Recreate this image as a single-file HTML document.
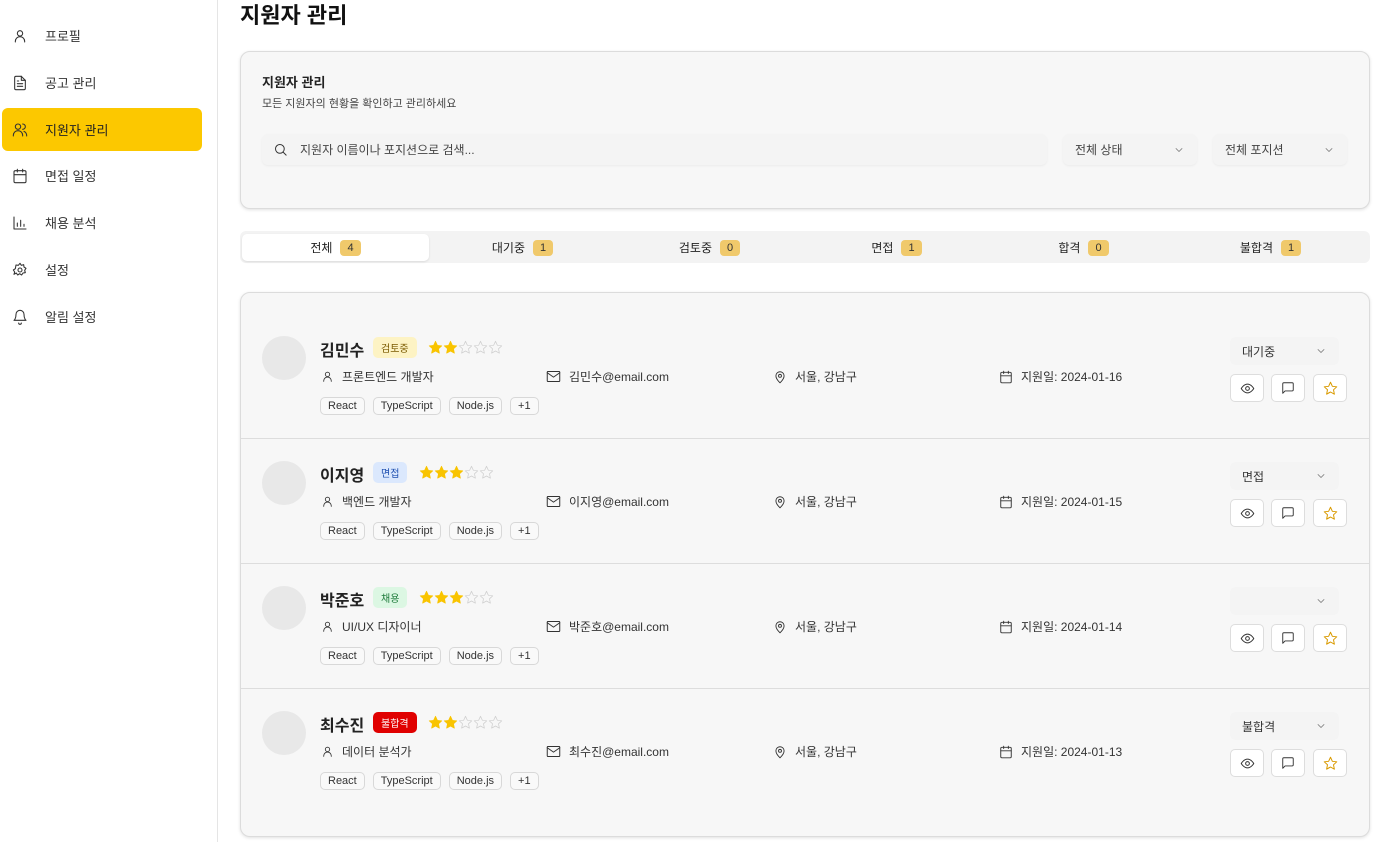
<!DOCTYPE html>
<html><head><meta charset="utf-8"><style>
*{box-sizing:border-box;margin:0;padding:0}
body{width:1397px;height:842px;overflow:hidden;background:#fff;font-family:"Liberation Sans","Noto Sans CJK KR",sans-serif;color:#222;position:relative}
.side{position:absolute;left:0;top:0;width:218px;height:842px;border-right:1px solid #e5e5e5}
.nav{position:absolute;left:2px;width:200px;height:43px;display:flex;align-items:center;font-size:13px;color:#333;border-radius:6px}
.nav svg{position:absolute;left:10px}
.nav span{position:absolute;left:43px}
.nav.act{background:#fcc800;color:#222}
svg{fill:none;stroke:#333;stroke-width:1.6;stroke-linecap:round;stroke-linejoin:round}
h1{position:absolute;left:240px;top:-2px;font-size:22px;font-weight:700;color:#111}
.card{position:absolute;left:240px;width:1130px;background:#f7f7f7;border:1px solid #dcdcdc;border-radius:10px;box-shadow:0 1px 3px rgba(0,0,0,.12)}
.inp{position:absolute;background:#f4f4f4;border-radius:6px;height:31px;box-shadow:0 1px 2px rgba(0,0,0,.05);font-size:12px;color:#444;display:flex;align-items:center}
.tabs{position:absolute;left:240px;top:231px;width:1130px;height:32px;background:#f3f3f3;border-radius:6px}
.tab{position:absolute;top:3px;height:27px;width:187px;display:flex;align-items:center;justify-content:center;font-size:12px;color:#222;gap:8px}
.tab.act{background:#fff;border-radius:5px;box-shadow:0 1px 2px rgba(0,0,0,.1)}
.cnt{background:#f0c96b;border-radius:4px;font-size:11px;padding:2px 7px;color:#333}
.row{position:absolute;left:0;width:1128px;height:125px;border-bottom:1px solid #ddd}
.av{position:absolute;left:21px;top:22px;width:44px;height:44px;border-radius:50%;background:#e8e8e8}
.nm{position:absolute;left:79px;top:23px;font-size:16px;font-weight:700;color:#222}
.bd{position:absolute;top:23px;font-size:10px;padding:3px 8px;border-radius:5px}
.stars{position:absolute;top:26px;display:flex}
.stars svg{width:15px;height:15px;stroke-width:1.2}
.f{fill:#f9c400;stroke:#f9c400 !important}
.e{stroke:#cfcfcf !important}
.info{position:absolute;top:54px;font-size:12px;color:#333;display:flex;align-items:center;gap:8px}
.tags{position:absolute;left:79px;top:83px;display:flex;gap:8px}
.tags span{border:1px solid #d8d8d8;border-radius:5px;font-size:11px;padding:2px 7px;background:#f9f9f9;color:#333}
.sel{position:absolute;left:989px;top:23px;width:109px;height:28px;background:#f4f4f4;border-radius:6px;font-size:12px;color:#333;padding-left:12px;display:flex;align-items:center}
.sel svg,.inp .ch{stroke:#777 !important}
.sel svg{position:absolute;right:12px}
.btn{position:absolute;top:60px;width:34px;height:28px;background:#fff;border:1px solid #ddd;border-radius:5px;display:flex;align-items:center;justify-content:center}
.gold{stroke:#d99a00 !important}
</style></head><body>
<svg width="0" height="0" style="position:absolute"><defs><path id="st" d="M12 2l3 6.5 7 .8-5.2 4.8 1.4 7L12 17.6 5.8 21l1.4-7L2 9.3l7-.8z"/></defs></svg>
<div class="side">
<div class="nav" style="top:14px"><svg width="16" height="16" viewBox="0 0 24 24"><circle cx="12" cy="8" r="4"/><path d="M5 21v-1a7 7 0 0 1 14 0v1"/></svg><span>프로필</span></div>
<div class="nav" style="top:61px"><svg width="16" height="16" viewBox="0 0 24 24"><path d="M14 2H6a2 2 0 0 0-2 2v16a2 2 0 0 0 2 2h12a2 2 0 0 0 2-2V8z"/><path d="M14 2v6h6M8 13h8M8 17h8M8 9h2"/></svg><span>공고 관리</span></div>
<div class="nav act" style="top:108px"><svg width="16" height="16" viewBox="0 0 24 24"><circle cx="9" cy="7" r="4"/><path d="M2 21v-1a7 7 0 0 1 14 0v1M16 3a4 4 0 0 1 0 8M22 21v-1a7 7 0 0 0-4-6"/></svg><span>지원자 관리</span></div>
<div class="nav" style="top:154px"><svg width="16" height="16" viewBox="0 0 24 24"><rect x="3" y="4" width="18" height="18" rx="2"/><path d="M16 2v4M8 2v4M3 10h18"/></svg><span>면접 일정</span></div>
<div class="nav" style="top:201px"><svg width="16" height="16" viewBox="0 0 24 24"><path d="M3 3v18h18M8 17v-5M13 17V8M18 17v-3"/></svg><span>채용 분석</span></div>
<div class="nav" style="top:248px"><svg width="16" height="16" viewBox="0 0 24 24"><circle cx="12" cy="12" r="3"/><path d="M12 2l2 3 3.5-1 .5 3.5 3 2-2 3 1 3.5-3.5.5-2 3-3-2-3 2-2-3L3 18.5l1-3.5-2-3 3-2L6 4.5 9.5 5z"/></svg><span>설정</span></div>
<div class="nav" style="top:295px"><svg width="16" height="16" viewBox="0 0 24 24"><path d="M6 8a6 6 0 0 1 12 0c0 7 3 9 3 9H3s3-2 3-9M10 21a2 2 0 0 0 4 0"/></svg><span>알림 설정</span></div>
</div>
<h1>지원자 관리</h1>
<div class="card" style="top:51px;height:158px">
<div style="position:absolute;left:21px;top:20px;font-size:13px;font-weight:700">지원자 관리</div>
<div style="position:absolute;left:21px;top:43px;font-size:11px;color:#444">모든 지원자의 현황을 확인하고 관리하세요</div>
<div class="inp" style="left:21px;top:82px;width:785px"><svg style="position:absolute;left:11px" width="15" height="15" viewBox="0 0 24 24"><circle cx="11" cy="11" r="7"/><path d="M21 21l-5-5"/></svg><span style="position:absolute;left:38px">지원자 이름이나 포지션으로 검색...</span></div>
<div class="inp" style="left:822px;top:82px;width:134px"><span style="position:absolute;left:12px">전체 상태</span><svg class="ch" style="position:absolute;right:12px" width="12" height="12" viewBox="0 0 24 24"><path d="M6 9l6 6 6-6"/></svg></div>
<div class="inp" style="left:972px;top:82px;width:134px"><span style="position:absolute;left:12px">전체 포지션</span><svg class="ch" style="position:absolute;right:12px" width="12" height="12" viewBox="0 0 24 24"><path d="M6 9l6 6 6-6"/></svg></div>
</div>
<div class="tabs">
<div class="tab act" style="left:2px">전체 <span class="cnt">4</span></div>
<div class="tab" style="left:189px">대기중 <span class="cnt">1</span></div>
<div class="tab" style="left:376px">검토중 <span class="cnt">0</span></div>
<div class="tab" style="left:563px">면접 <span class="cnt">1</span></div>
<div class="tab" style="left:750px">합격 <span class="cnt">0</span></div>
<div class="tab" style="left:937px">불합격 <span class="cnt">1</span></div>
</div>
<div class="card" style="top:292px;height:545px">
<div class="row" style="top:21px">
<div class="av"></div><div class="nm">김민수</div>
<div class="bd" style="left:132px;background:#fdf3c4;color:#7a5a00">검토중</div>
<div class="stars" style="left:187px"><svg viewBox="0 0 24 24"><use href="#st" class="f"/></svg><svg viewBox="0 0 24 24"><use href="#st" class="f"/></svg><svg viewBox="0 0 24 24"><use href="#st" class="e"/></svg><svg viewBox="0 0 24 24"><use href="#st" class="e"/></svg><svg viewBox="0 0 24 24"><use href="#st" class="e"/></svg></div>
<div class="info" style="left:80px"><svg width="13" height="13" viewBox="0 0 24 24"><circle cx="12" cy="8" r="4"/><path d="M5 21v-1a7 7 0 0 1 14 0v1"/></svg>프론트엔드 개발자</div>
<div class="info" style="left:305px"><svg width="15" height="15" viewBox="0 0 24 24"><rect x="2" y="4" width="20" height="16" rx="1"/><path d="M2 6l10 7 10-7"/></svg>김민수@email.com</div>
<div class="info" style="left:532px"><svg width="14" height="14" viewBox="0 0 24 24"><path d="M12 22s7-7 7-12a7 7 0 0 0-14 0c0 5 7 12 7 12z"/><circle cx="12" cy="10" r="2.5"/></svg>서울, 강남구</div>
<div class="info" style="left:758px"><svg width="14" height="14" viewBox="0 0 24 24"><rect x="3" y="4" width="18" height="18" rx="2"/><path d="M16 2v4M8 2v4M3 10h18"/></svg>지원일: 2024-01-16</div>
<div class="tags"><span>React</span><span>TypeScript</span><span>Node.js</span><span>+1</span></div>
<div class="sel">대기중<svg width="12" height="12" viewBox="0 0 24 24"><path d="M6 9l6 6 6-6"/></svg></div>
<div class="btn" style="left:989px"><svg width="15" height="15" viewBox="0 0 24 24"><path d="M2 12s4-7 10-7 10 7 10 7-4 7-10 7S2 12 2 12z"/><circle cx="12" cy="12" r="3"/></svg></div>
<div class="btn" style="left:1030px"><svg width="14" height="14" viewBox="0 0 24 24"><path d="M21 15a2 2 0 0 1-2 2H7l-4 4V5a2 2 0 0 1 2-2h14a2 2 0 0 1 2 2z"/></svg></div>
<div class="btn" style="left:1072px"><svg width="15" height="15" viewBox="0 0 24 24"><use href="#st" class="gold"/></svg></div>
</div>
<div class="row" style="top:146px">
<div class="av"></div><div class="nm">이지영</div>
<div class="bd" style="left:132px;background:#dbe8fd;color:#1e4fb0">면접</div>
<div class="stars" style="left:178px"><svg viewBox="0 0 24 24"><use href="#st" class="f"/></svg><svg viewBox="0 0 24 24"><use href="#st" class="f"/></svg><svg viewBox="0 0 24 24"><use href="#st" class="f"/></svg><svg viewBox="0 0 24 24"><use href="#st" class="e"/></svg><svg viewBox="0 0 24 24"><use href="#st" class="e"/></svg></div>
<div class="info" style="left:80px"><svg width="13" height="13" viewBox="0 0 24 24"><circle cx="12" cy="8" r="4"/><path d="M5 21v-1a7 7 0 0 1 14 0v1"/></svg>백엔드 개발자</div>
<div class="info" style="left:305px"><svg width="15" height="15" viewBox="0 0 24 24"><rect x="2" y="4" width="20" height="16" rx="1"/><path d="M2 6l10 7 10-7"/></svg>이지영@email.com</div>
<div class="info" style="left:532px"><svg width="14" height="14" viewBox="0 0 24 24"><path d="M12 22s7-7 7-12a7 7 0 0 0-14 0c0 5 7 12 7 12z"/><circle cx="12" cy="10" r="2.5"/></svg>서울, 강남구</div>
<div class="info" style="left:758px"><svg width="14" height="14" viewBox="0 0 24 24"><rect x="3" y="4" width="18" height="18" rx="2"/><path d="M16 2v4M8 2v4M3 10h18"/></svg>지원일: 2024-01-15</div>
<div class="tags"><span>React</span><span>TypeScript</span><span>Node.js</span><span>+1</span></div>
<div class="sel">면접<svg width="12" height="12" viewBox="0 0 24 24"><path d="M6 9l6 6 6-6"/></svg></div>
<div class="btn" style="left:989px"><svg width="15" height="15" viewBox="0 0 24 24"><path d="M2 12s4-7 10-7 10 7 10 7-4 7-10 7S2 12 2 12z"/><circle cx="12" cy="12" r="3"/></svg></div>
<div class="btn" style="left:1030px"><svg width="14" height="14" viewBox="0 0 24 24"><path d="M21 15a2 2 0 0 1-2 2H7l-4 4V5a2 2 0 0 1 2-2h14a2 2 0 0 1 2 2z"/></svg></div>
<div class="btn" style="left:1072px"><svg width="15" height="15" viewBox="0 0 24 24"><use href="#st" class="gold"/></svg></div>
</div>
<div class="row" style="top:271px">
<div class="av"></div><div class="nm">박준호</div>
<div class="bd" style="left:132px;background:#dcf7e3;color:#1d7a3a">채용</div>
<div class="stars" style="left:178px"><svg viewBox="0 0 24 24"><use href="#st" class="f"/></svg><svg viewBox="0 0 24 24"><use href="#st" class="f"/></svg><svg viewBox="0 0 24 24"><use href="#st" class="f"/></svg><svg viewBox="0 0 24 24"><use href="#st" class="e"/></svg><svg viewBox="0 0 24 24"><use href="#st" class="e"/></svg></div>
<div class="info" style="left:80px"><svg width="13" height="13" viewBox="0 0 24 24"><circle cx="12" cy="8" r="4"/><path d="M5 21v-1a7 7 0 0 1 14 0v1"/></svg>UI/UX 디자이너</div>
<div class="info" style="left:305px"><svg width="15" height="15" viewBox="0 0 24 24"><rect x="2" y="4" width="20" height="16" rx="1"/><path d="M2 6l10 7 10-7"/></svg>박준호@email.com</div>
<div class="info" style="left:532px"><svg width="14" height="14" viewBox="0 0 24 24"><path d="M12 22s7-7 7-12a7 7 0 0 0-14 0c0 5 7 12 7 12z"/><circle cx="12" cy="10" r="2.5"/></svg>서울, 강남구</div>
<div class="info" style="left:758px"><svg width="14" height="14" viewBox="0 0 24 24"><rect x="3" y="4" width="18" height="18" rx="2"/><path d="M16 2v4M8 2v4M3 10h18"/></svg>지원일: 2024-01-14</div>
<div class="tags"><span>React</span><span>TypeScript</span><span>Node.js</span><span>+1</span></div>
<div class="sel"><svg width="12" height="12" viewBox="0 0 24 24"><path d="M6 9l6 6 6-6"/></svg></div>
<div class="btn" style="left:989px"><svg width="15" height="15" viewBox="0 0 24 24"><path d="M2 12s4-7 10-7 10 7 10 7-4 7-10 7S2 12 2 12z"/><circle cx="12" cy="12" r="3"/></svg></div>
<div class="btn" style="left:1030px"><svg width="14" height="14" viewBox="0 0 24 24"><path d="M21 15a2 2 0 0 1-2 2H7l-4 4V5a2 2 0 0 1 2-2h14a2 2 0 0 1 2 2z"/></svg></div>
<div class="btn" style="left:1072px"><svg width="15" height="15" viewBox="0 0 24 24"><use href="#st" class="gold"/></svg></div>
</div>
<div class="row" style="top:396px;border-bottom:none">
<div class="av"></div><div class="nm">최수진</div>
<div class="bd" style="left:132px;background:#e00000;color:#fff">불합격</div>
<div class="stars" style="left:187px"><svg viewBox="0 0 24 24"><use href="#st" class="f"/></svg><svg viewBox="0 0 24 24"><use href="#st" class="f"/></svg><svg viewBox="0 0 24 24"><use href="#st" class="e"/></svg><svg viewBox="0 0 24 24"><use href="#st" class="e"/></svg><svg viewBox="0 0 24 24"><use href="#st" class="e"/></svg></div>
<div class="info" style="left:80px"><svg width="13" height="13" viewBox="0 0 24 24"><circle cx="12" cy="8" r="4"/><path d="M5 21v-1a7 7 0 0 1 14 0v1"/></svg>데이터 분석가</div>
<div class="info" style="left:305px"><svg width="15" height="15" viewBox="0 0 24 24"><rect x="2" y="4" width="20" height="16" rx="1"/><path d="M2 6l10 7 10-7"/></svg>최수진@email.com</div>
<div class="info" style="left:532px"><svg width="14" height="14" viewBox="0 0 24 24"><path d="M12 22s7-7 7-12a7 7 0 0 0-14 0c0 5 7 12 7 12z"/><circle cx="12" cy="10" r="2.5"/></svg>서울, 강남구</div>
<div class="info" style="left:758px"><svg width="14" height="14" viewBox="0 0 24 24"><rect x="3" y="4" width="18" height="18" rx="2"/><path d="M16 2v4M8 2v4M3 10h18"/></svg>지원일: 2024-01-13</div>
<div class="tags"><span>React</span><span>TypeScript</span><span>Node.js</span><span>+1</span></div>
<div class="sel">불합격<svg width="12" height="12" viewBox="0 0 24 24"><path d="M6 9l6 6 6-6"/></svg></div>
<div class="btn" style="left:989px"><svg width="15" height="15" viewBox="0 0 24 24"><path d="M2 12s4-7 10-7 10 7 10 7-4 7-10 7S2 12 2 12z"/><circle cx="12" cy="12" r="3"/></svg></div>
<div class="btn" style="left:1030px"><svg width="14" height="14" viewBox="0 0 24 24"><path d="M21 15a2 2 0 0 1-2 2H7l-4 4V5a2 2 0 0 1 2-2h14a2 2 0 0 1 2 2z"/></svg></div>
<div class="btn" style="left:1072px"><svg width="15" height="15" viewBox="0 0 24 24"><use href="#st" class="gold"/></svg></div>
</div>
</div>
</body></html>
